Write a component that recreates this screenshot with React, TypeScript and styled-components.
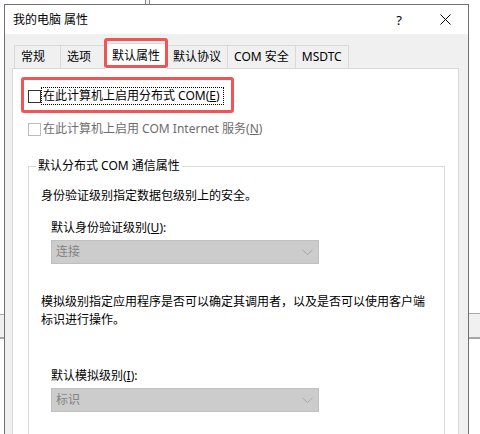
import React from 'react';
import styled, { createGlobalStyle, css } from 'styled-components';

const GlobalStyle = createGlobalStyle`
  html, body {
    margin: 0;
    padding: 0;
    background: #ffffff;
    overflow: hidden;
  }

  body {
    font-family: "Noto Sans", "Noto Sans CJK SC", sans-serif;
    font-size: 12px;
    color: #000;
  }
`;

const Page = styled.div`
  position: relative;
  width: 480px;
  height: 434px;
  overflow: hidden;
  background: #ffffff;
`;

/* fragments of the windows lying behind the dialog */
const BackStrip = styled.div<{ $left: number; $top: number; $width: number; $height: number }>`
  position: absolute;
  left: ${p => p.$left}px;
  top: ${p => p.$top}px;
  width: ${p => p.$width}px;
  height: ${p => p.$height}px;
  background: #f0f0f0;
  border-top: 1px solid #a8a8a8;
  border-bottom: 2px solid #a8a8a8;
  box-sizing: border-box;
`;

const BackPost = styled.div`
  position: absolute;
  left: 145px;
  top: 0;
  width: 5px;
  height: 4px;
  border-left: 1px solid #8a8a8a;
  border-right: 1px solid #8a8a8a;
  box-sizing: border-box;
  background: #f2f2f2;
`;

const Window = styled.div`
  position: relative;
  margin: 4px 0 0 4px;
  width: 465px;
  height: 440px;
  box-sizing: border-box;
  border: 1px solid #707070;
  border-bottom: none;
  background: #f0f0f0;
  display: flex;
  flex-direction: column;
`;

const TitleBar = styled.div`
  height: 29px;
  background: #ffffff;
  display: flex;
  align-items: center;
  padding-left: 8px;
`;

const Title = styled.div`
  flex: 1;
  line-height: 18px;
  margin-top: 1px;
`;

const CaptionButton = styled.div`
  width: 46px;
  height: 29px;
  display: flex;
  align-items: center;
  justify-content: center;
  font-size: 13px;
  color: #000;
`;

const Body = styled.div`
  flex: 1;
  display: flex;
  flex-direction: column;
  padding: 9px 9px 0 7px;
`;

const TabRow = styled.div`
  display: flex;
  align-items: flex-end;
  padding-left: 2px;
  position: relative;
  z-index: 1;
`;

const highlight = css`
  &::after {
    content: '';
    position: absolute;
    border: 3px solid #f05454;
    border-radius: 3px;
    pointer-events: none;
  }
`;

const Tab = styled.div<{ $active?: boolean }>`
  position: relative;
  box-sizing: border-box;
  min-width: 47px;
  height: 23px;
  padding: 0 6px;
  line-height: 22px;
  background: #f0f0f0;
  border: 1px solid #d9d9d9;
  border-bottom: none;
  margin-left: -1px;
  white-space: nowrap;

  &:first-child {
    margin-left: 0;
  }

  ${p =>
    p.$active &&
    css`
      height: 26px;
      margin: 0 -2px -1px -3px;
      padding: 0 7px;
      line-height: 24px;
      background: #ffffff;
      z-index: 2;
      ${highlight}
      &::after {
        left: -1px;
        right: -1px;
        top: -6px;
        bottom: 1px;
      }
    `}

  ${p =>
    p.$active &&
    css`
      & + div {
        margin-left: 0;
      }
    `}
`;

const Panel = styled.div`
  flex: 1;
  background: #ffffff;
  border: 1px solid #d9d9d9;
  padding: 18px 13px 0 15px;
`;

const CheckRow = styled.div<{ $disabled?: boolean; $highlighted?: boolean }>`
  position: relative;
  display: flex;
  align-items: center;
  height: 18px;
  width: max-content;
  color: ${p => (p.$disabled ? '#6d6d6d' : '#000')};
  margin-bottom: 15px;

  ${p =>
    p.$highlighted &&
    css`
      ${highlight}
      &::after {
        left: -7px;
        right: -10px;
        top: -10px;
        bottom: -8px;
      }
    `}
`;

const Box = styled.span<{ $disabled?: boolean }>`
  width: 13px;
  height: 13px;
  box-sizing: border-box;
  border: 1px solid ${p => (p.$disabled ? '#bcbcbc' : '#333333')};
  background: #ffffff;
`;

const CheckLabel = styled.span<{ $focused?: boolean }>`
  padding: 0 3px 0 1px;
  line-height: 16px;
  border: 1px dotted ${p => (p.$focused ? '#000' : 'transparent')};
  white-space: nowrap;
`;

const Group = styled.fieldset`
  margin: 19px 0 0 0;
  padding: 0 0 40px 12px;
  border: 1px solid #dcdcdc;
  min-width: 0;
`;

const Legend = styled.legend`
  margin-left: -5px;
  padding: 0 2px;
  line-height: 18px;
`;

const Text = styled.div<{ $top: number; $indent?: number }>`
  margin-top: ${p => p.$top}px;
  margin-left: ${p => p.$indent || 0}px;
  line-height: 18px;
  white-space: nowrap;
`;

const Select = styled.div`
  margin: 3px 0 0 10px;
  width: 268px;
  height: 24px;
  box-sizing: border-box;
  background: #cccccc;
  border: 1px solid #bfbfbf;
  display: flex;
  align-items: center;
  justify-content: space-between;
  padding: 0 5px 0 4px;
  color: #838383;
  line-height: 18px;
`;

const Chevron = () => (
  <svg width="11" height="7" viewBox="0 0 11 7">
    <path d="M0.5 0.8 L5.5 5.6 L10.5 0.8" fill="none" stroke="#a8a8a8" strokeWidth="1" />
  </svg>
);

const CloseIcon = () => (
  <svg width="11" height="11" viewBox="0 0 11 11">
    <path d="M0.5 0.5 L10.5 10.5 M10.5 0.5 L0.5 10.5" stroke="#000" strokeWidth="1" />
  </svg>
);

const tabs = ['常规', '选项', '默认属性', '默认协议', 'COM 安全', 'MSDTC'];

const App: React.FC = () => {
  return (
    <Page>
      <GlobalStyle />
      <BackPost />
      <BackStrip $left={0} $top={314} $width={4} $height={25} />
      <BackStrip $left={469} $top={313} $width={11} $height={26} />
      <Window>
        <TitleBar>
          <Title>我的电脑 属性</Title>
          <CaptionButton>?</CaptionButton>
          <CaptionButton>
            <CloseIcon />
          </CaptionButton>
        </TitleBar>
        <Body>
          <TabRow>
            {tabs.map(tab => (
              <Tab key={tab} $active={tab === '默认属性'}>
                {tab}
              </Tab>
            ))}
          </TabRow>
          <Panel>
            <CheckRow $highlighted>
              <Box />
              <CheckLabel $focused>
                在此计算机上启用分布式 COM(<u>E</u>)
              </CheckLabel>
            </CheckRow>
            <CheckRow $disabled>
              <Box $disabled />
              <CheckLabel>
                在此计算机上启用 COM Internet 服务(<u>N</u>)
              </CheckLabel>
            </CheckRow>
            <Group>
              <Legend>默认分布式 COM 通信属性</Legend>
              <Text $top={12}>身份验证级别指定数据包级别上的安全。</Text>
              <Text $top={14} $indent={10}>
                默认身份验证级别(<u>U</u>):
              </Text>
              <Select>
                <span>连接</span>
                <Chevron />
              </Select>
              <Text $top={29}>
                模拟级别指定应用程序是否可以确定其调用者，以及是否可以使用客户端
                <br />
                标识进行操作。
              </Text>
              <Text $top={38} $indent={10}>
                默认模拟级别(<u>I</u>):
              </Text>
              <Select>
                <span>标识</span>
                <Chevron />
              </Select>
            </Group>
          </Panel>
        </Body>
      </Window>
    </Page>
  );
};

export default App;
